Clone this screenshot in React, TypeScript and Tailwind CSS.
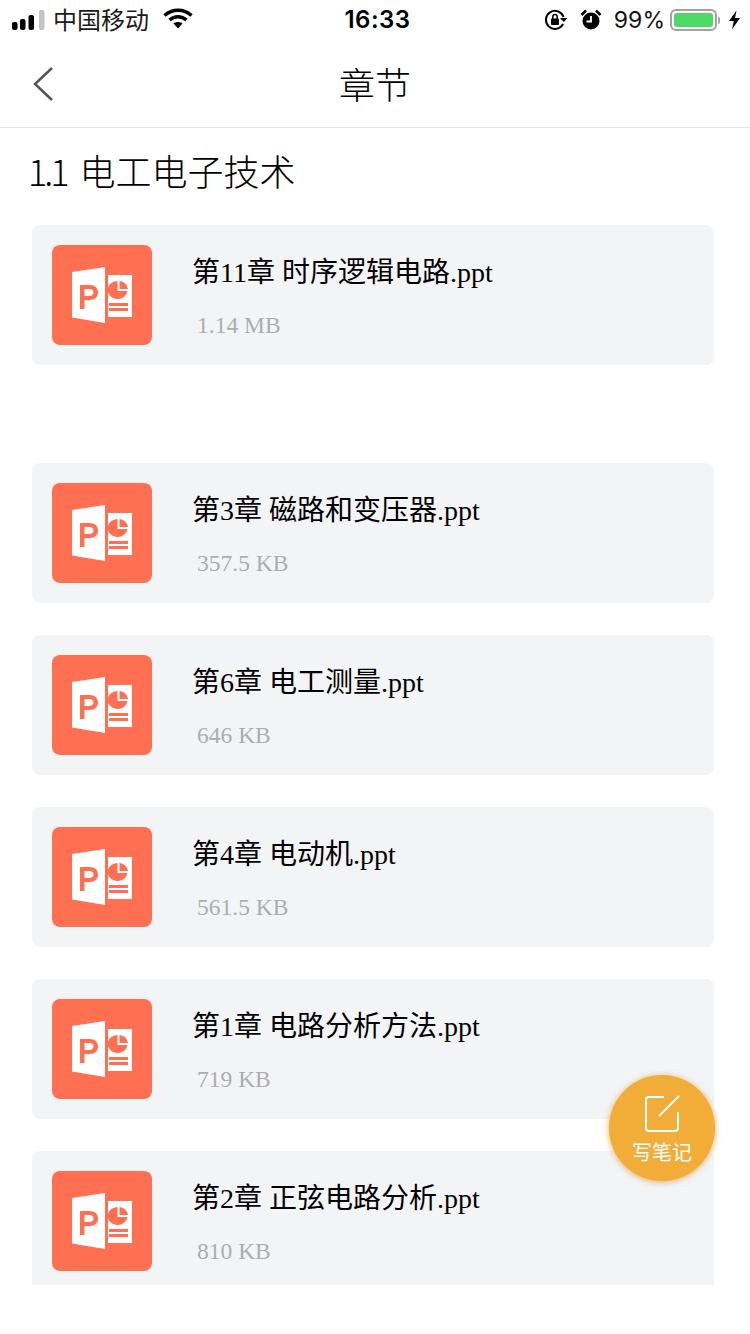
const sans = "font-['Inter','Noto_Sans_CJK_SC',sans-serif]";

const files = [
  { name: "第11章 时序逻辑电路.ppt", size: "1.14 MB", mt: "mt-0" },
  { name: "第3章 磁路和变压器.ppt", size: "357.5 KB", mt: "mt-[98px]" },
  { name: "第6章 电工测量.ppt", size: "646 KB", mt: "mt-8" },
  { name: "第4章 电动机.ppt", size: "561.5 KB", mt: "mt-8" },
  { name: "第1章 电路分析方法.ppt", size: "719 KB", mt: "mt-8" },
  { name: "第2章 正弦电路分析.ppt", size: "810 KB", mt: "mt-8" },
];

function PptIcon() {
  return (
    <div className="w-[100px] h-[100px] shrink-0 rounded-[8px] bg-[#ff6f52] flex items-center justify-center">
      <svg width="100" height="100" viewBox="0 0 100 100">
        <path fillRule="evenodd" fill="#fff" d="M20 27 L53 22 V78 L20 72.500 Z M28 40 V64 H32.500 V55 H37.500 C43.500 55 46 51.500 46 47.500 C46 43 43 40 37.500 40 Z M32.500 44 V51 H37 C40 51 41.500 49.700 41.500 47.500 C41.500 45.300 40 44 37 44 Z" />
        <rect x="56" y="30" width="24" height="42" fill="#fff" />
        <path fill="#ff6f52" d="M65.500 36 V46 H75.500 A10 9 0 1 1 65.500 36 Z" />
        <path fill="#ff6f52" d="M67.500 36 A9 9 0 0 1 76 44 H67.500 Z" />
        <rect x="57" y="58" width="19" height="3" fill="#ff6f52" />
        <rect x="57" y="63" width="19" height="3" fill="#ff6f52" />
      </svg>
    </div>
  );
}

function FileCard({ name, size, mt }: { name: string; size: string; mt: string }) {
  return (
    <div className={`${mt} h-[140px] shrink-0 rounded-[8px] bg-[#f3f4f6] pl-5 pt-5 flex items-start`}>
      <PptIcon />
      <div className="ml-[40px] font-['Liberation_Serif','Noto_Sans_CJK_SC',serif]">
        <div className="text-[28px] leading-[40px] text-black mt-[8px] h-[40px] whitespace-nowrap">{name}</div>
        <div className="text-[23.5px] leading-[30px] text-[#adadad] mt-[17px] ml-[5px] whitespace-nowrap">{size}</div>
      </div>
    </div>
  );
}

function StatusBar() {
  return (
    <div className={`h-10 flex items-center justify-between text-black ${sans}`}>
      <div className="flex items-center w-[255px] pl-3">
        <svg width="33" height="20" viewBox="0 0 33 20" fill="#000">
          <rect x="0" y="12" width="5.500" height="8" rx="2" />
          <rect x="8" y="9" width="5.500" height="11" rx="2" />
          <rect x="16.500" y="5" width="5.500" height="15" rx="2" />
          <rect x="27" y="0" width="5.500" height="20" rx="2" fill="#c4c4c4" />
        </svg>
        <span className="ml-[8px] mt-[-2px] text-[24px] leading-none font-['Noto_Sans_CJK_SC',sans-serif] whitespace-nowrap text-[#1a1a1a]">中国移动</span>
        <svg className="ml-[14px] mt-[-2px]" width="30" height="22" viewBox="0 0 30 22">
          <path d="M1.500 7.500 C9 0.500 21 0.500 28.500 7.500" stroke="#000" strokeWidth="3.500" fill="none" />
          <path d="M6.500 12 C11.500 7.500 18.500 7.500 23.500 12" stroke="#000" strokeWidth="3.500" fill="none" />
          <path d="M10.500 15.500 C13 13.500 17 13.500 19.500 15.500 L15 20.500 Z" fill="#000" />
        </svg>
      </div>
      <div className="text-[24px] font-semibold font-['Inter',sans-serif] leading-none tracking-[0.5px]">16:33</div>
      <div className="flex items-center justify-end w-[250px] pr-[9px]">
        <svg width="24" height="22" viewBox="0 0 24 22">
          <path d="M19.500 8 A9 9 0 1 0 19 15" stroke="#000" strokeWidth="2" fill="none" />
          <path d="M16 9 L23.500 9 L19.800 13 Z" fill="#000" />
          <rect x="7" y="9.500" width="8" height="6.500" rx="1" fill="#000" />
          <path d="M8.800 10 V7.800 A2.200 2.200 0 0 1 13.200 7.800 V10" stroke="#000" strokeWidth="1.500" fill="none" />
        </svg>
        <svg className="ml-[12px]" width="22" height="22" viewBox="0 0 22 22">
          <circle cx="11" cy="12" r="8.500" fill="#000" />
          <path d="M11 7 V12.500 H6.500" stroke="#fff" strokeWidth="1.800" fill="none" />
          <path d="M1.500 6 L6 1.500 M16 1.500 L20.500 6" stroke="#000" strokeWidth="2.500" />
        </svg>
        <span className="ml-[12px] text-[23px] leading-none font-['Inter',sans-serif] font-normal text-[#111]">99%</span>
        <div className="ml-[5px] w-[47px] h-[22px] rounded-[6px] border-2 border-[#a3a3a3] p-[2px]">
          <div className="w-full h-full rounded-[3px] bg-[#4cd964]" />
        </div>
        <div className="ml-[1px] w-[2px] h-[7px] bg-[#a3a3a3] rounded-r-[2px]" />
        <svg className="ml-[8px]" width="13" height="20" viewBox="0 0 13 20">
          <path d="M8.500 0.500 L1 11 H5.800 L4 19.500 L12 8 H7 Z" fill="#000" />
        </svg>
      </div>
    </div>
  );
}

export default function App() {
  return (
    <div className="relative w-[750px] h-[1334px] bg-white overflow-hidden">
      <StatusBar />
      <header className="relative h-[88px] border-b border-[#e8e8e8] flex items-center justify-center">
        <svg className="absolute left-[32px] top-[26px]" width="24" height="36" viewBox="0 0 24 36">
          <path d="M20 2 L3 18 L20 34" stroke="#555" strokeWidth="2.500" fill="none" />
        </svg>
        <h1 className="text-[36px] leading-none font-light text-black font-['Noto_Sans_CJK_SC',sans-serif] mt-[-2px]">章节</h1>
      </header>
      <div className="pl-[28px] pt-[20px] h-[97px]">
        <h2 className="text-[36px] leading-[44px] font-light text-black font-['Noto_Sans_CJK_SC',sans-serif] whitespace-nowrap">
          <span className="tracking-[-3px]">1.1</span>
          <span className="ml-[13px]">电工电子技术</span>
        </h2>
      </div>
      <div className="ml-[32px] w-[682px] h-[1060px] overflow-hidden flex flex-col">
        {files.map((f) => (
          <FileCard key={f.name} {...f} />
        ))}
      </div>
      <button className="absolute left-[609px] top-[1075px] w-[106px] h-[106px] rounded-full bg-[#f2ad38] shadow-[0_1px_6px_rgba(220,150,40,0.75)] flex flex-col items-center">
        <svg className="mt-[20px]" width="36" height="38" viewBox="0 0 36 38">
          <path d="M20 2 H5 A3 3 0 0 0 2 5 V33 A3 3 0 0 0 5 36 H31 A3 3 0 0 0 34 33 V17" stroke="#fff" strokeWidth="2" fill="none" />
          <path d="M15 21 L35 1" stroke="#fff" strokeWidth="2" fill="none" />
        </svg>
        <span className="mt-[6px] text-[20px] leading-[26px] font-normal text-white font-['Noto_Sans_CJK_SC',sans-serif]">写笔记</span>
      </button>
    </div>
  );
}
